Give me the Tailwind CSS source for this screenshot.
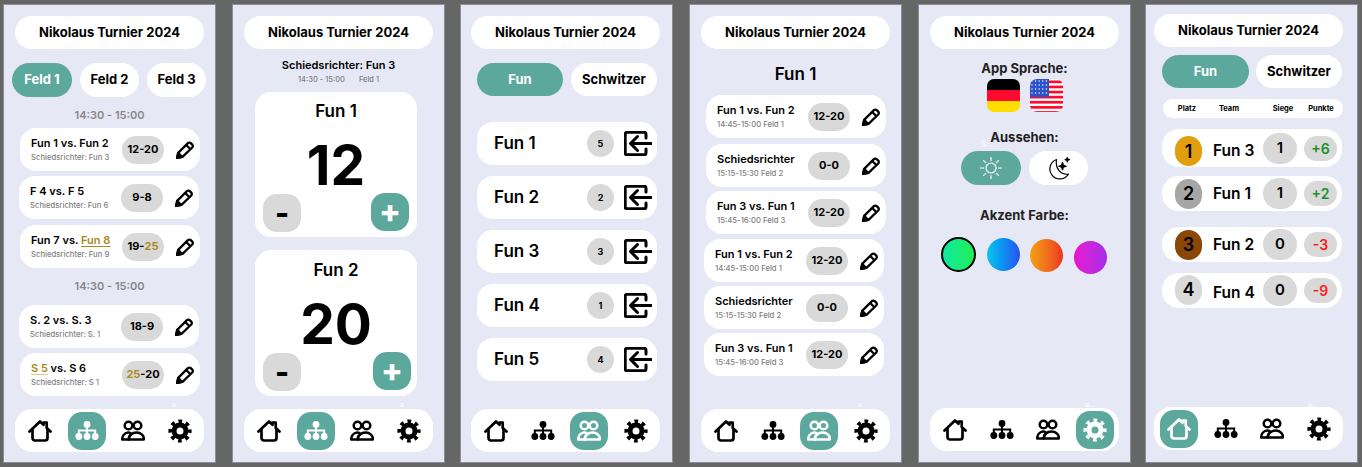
<!DOCTYPE html>
<html lang="de">

<head>
    <meta charset="UTF-8">
    <meta name="viewport" content="width=device-width, initial-scale=1.0">
    <title>Nikolaus Turnier 2024</title>
    <script src="https://cdn.jsdelivr.net/npm/@tailwindcss/browser@4"></script>
</head>

<body class="h-[467px] w-[1362px] overflow-hidden bg-[#666666] font-['Inter','Liberation_Sans',sans-serif] text-black">
    <div id="app" class="flex pt-[5px] pl-[4px]"></div>

    <script>
        const home = `<svg viewBox="0 0 24 24" class="w-[24px] h-[24px]" fill="none" stroke="currentColor" stroke-width="2.700" stroke-linecap="round" stroke-linejoin="round"><path d="M1.500 12.500 12 2.500l3.500 3.300V3.500h3.200v5.400l3.800 3.600"/><path d="M4.500 10.500V19a2.500 2.500 0 0 0 2.500 2.500h10a2.500 2.500 0 0 0 2.500-2.500v-8.500"/></svg>`;
        const tree = `<svg viewBox="0 0 24 24" class="w-[24px] h-[24px]" fill="currentColor"><circle cx="12" cy="5.500" r="3.400"/><circle cx="3.800" cy="17.500" r="3.400"/><circle cx="12" cy="17.500" r="3.400"/><circle cx="20.200" cy="17.500" r="3.400"/><path d="M11 7h2v3.500h8.200V15h-2v-2.500H13V15h-2v-2.500H4.800V15h-2v-4.500H11z"/></svg>`;
        const people = `<svg viewBox="0 0 24 24" class="w-[24px] h-[24px]" fill="none" stroke="currentColor" stroke-width="2.500" stroke-linejoin="round"><circle cx="7.500" cy="6.500" r="3.800"/><circle cx="16.500" cy="6.500" r="3.800"/><path d="M1.200 20.500c0-3.500 2.300-6.500 5.800-7 1.800-.2 2.700.5 3.500 1.500-1.800 1-2.800 3-2.800 5.500z"/><path d="M7.700 20.500c0-3.800 3.300-7 7.800-7s7.800 3.200 7.300 7z"/></svg>`;
        const gear = `<svg viewBox="0 0 24 24" class="w-[24px] h-[24px]" fill="none" stroke="currentColor"><circle cx="12" cy="12" r="6" stroke-width="5"/><circle cx="12" cy="12" r="9.800" stroke-width="3.600" stroke-dasharray="3.700 3.997" stroke-dashoffset="1.850"/></svg>`;
        const pencil = `<svg viewBox="0 0 24 24" class="w-[20px] h-[20px] shrink-0" fill="none" stroke="currentColor" stroke-width="2.700" stroke-linejoin="round"><path d="M2.500 21.500l1.300-6L15.500 3.800a2.400 2.400 0 0 1 3.400 0l1.800 1.800a2.400 2.400 0 0 1 0 3.400L9 20.200z"/><path d="M13.500 6l4.500 4.500"/><path d="M2.500 21.500l1.300-6 4.700 4.700z" fill="currentColor"/></svg>`;
        const enter = `<svg viewBox="0 0 28 25" class="w-[28px] h-[25px]" fill="none" stroke="currentColor" stroke-width="3" stroke-linecap="round" stroke-linejoin="round"><path d="M22 7V3.200a2 2 0 0 0-2-2H3.200a2 2 0 0 0-2 2v18.600a2 2 0 0 0 2 2H20a2 2 0 0 0 2-2V18"/><path d="M27 12.500H7M13.500 5.500l-7 7 7 7"/></svg>`;
        const sun = `<svg viewBox="0 0 24 24" class="w-[24px] h-[24px]" fill="none" stroke="white" stroke-width="1.200" stroke-linecap="round"><circle cx="12" cy="12" r="5"/><path d="M12 1.500v3M12 19.500v3M1.500 12h3M19.500 12h3M4.600 4.600l2.100 2.100M17.300 17.300l2.100 2.100M4.600 19.400l2.100-2.100M17.300 6.700l2.100-2.100"/></svg>`;
        const moon = `<svg viewBox="0 0 24 24" class="w-[24px] h-[24px]" fill="none" stroke="black" stroke-width="1.200" stroke-linejoin="round"><path d="M9.500 3.500a10 10 0 1 0 12 14.500c-7.500 1.500-13.500-5.500-12-14.500z"/><path d="M15.500 6.500l.9 2.800 2.800.9-2.800.9-.9 2.800-.9-2.800-2.800-.9 2.800-.9z" fill="black"/><path d="M20.300 1.500l.5 1.700 1.700.5-1.700.5-.5 1.700-.5-1.700-1.700-.5 1.700-.5z" fill="black"/></svg>`;

        const title = (cls) => `<div class="${cls} w-[189px] h-[33px] shrink-0 rounded-full bg-white flex items-center justify-center text-[13px] font-bold">Nikolaus Turnier 2024</div>`;

        const nav = (active, cls) => `
            <div class="${cls} mt-auto w-[189px] h-[43px] shrink-0 rounded-[17px] bg-white flex items-center gap-[8.500px] pl-[6px]">
                ${[home, tree, people, gear].map((icon, i) => i === active
                    ? `<div class="w-[38px] h-[38px] rounded-[14px] bg-[#5DA89C] text-white flex items-center justify-center">${icon}</div>`
                    : `<div class="w-[38px] h-[38px] flex items-center justify-center">${icon}</div>`).join('')}
            </div>`;

        const tab = (text, on, cls) => `<div class="${cls} rounded-[17px] flex items-center justify-center font-bold ${on ? 'bg-[#5DA89C] text-white' : 'bg-white'}">${text}</div>`;

        const match = (name, sub, score, cls) => `
            <div class="${cls} w-[180px] h-[43px] shrink-0 rounded-[16px] bg-white flex items-center pl-[11px]">
                <div class="w-[91px] shrink-0">
                    <div class="text-[11px] leading-[13px] font-semibold whitespace-nowrap">${name}</div>
                    <div class="mt-[3px] text-[7.700px] leading-[10px] font-medium text-[#808080] whitespace-nowrap">${sub}</div>
                </div>
                <div class="w-[42px] h-[28px] shrink-0 rounded-full bg-[#D9D9D9] flex items-center justify-center text-[11px] font-bold">${score}</div>
                <div class="ml-[11px]">${pencil}</div>
            </div>`;

        const slot = (text, cls) => `<div class="${cls} h-[16px] text-center text-[11px] leading-[16px] font-semibold text-[#888888]">${text}</div>`;

        const counter = (name, value, cardCls, nameCls, rowCls, plusCls) => `
            <div class="${cardCls} ml-[22px] w-[162px] rounded-[16px] bg-white flex flex-col">
                <div class="${nameCls} h-[20px] text-center text-[17px] leading-[20px] font-semibold">${name}</div>
                <div class="mt-[15px] h-[58px] text-center text-[55px] leading-[58px] font-bold">${value}</div>
                <div class="${rowCls} flex justify-between">
                    <div class="w-[38px] h-[38px] rounded-[14px] bg-[#D9D9D9] flex items-center justify-center text-[30px] font-extrabold">-</div>
                    <div class="${plusCls} w-[38px] h-[38px] rounded-[14px] bg-[#5DA89C] text-white flex items-center justify-center text-[32px] font-extrabold">+</div>
                </div>
            </div>`;

        const team = (name, count, cls) => `
            <div class="${cls} ml-[16px] w-[180px] h-[43px] shrink-0 rounded-[16px] bg-white flex items-center pl-[17px]">
                <div class="pt-[1px] text-[17px] font-semibold w-[93px]">${name}</div>
                <div class="w-[27px] h-[27px] rounded-full bg-[#D9D9D9] flex items-center justify-center text-[9px] font-bold">${count}</div>
                <div class="ml-[10px] text-black">${enter}</div>
            </div>`;

        const rank = (place, color, name, wins, points, pointColor, cls, rowH, circleCls, nameCls) => `
            <div class="${cls} ${rowH} ml-[16px] w-[180px] shrink-0 rounded-[17px] bg-white flex items-center">
                <div class="${color} ${circleCls} ml-[13px] w-[27px] h-[30px] rounded-full flex items-center justify-center text-[18px] font-semibold">${place}</div>
                <div class="${nameCls} ml-[11px] w-[50px] text-[15.500px] font-semibold">${name}</div>
                <div class="w-[34px] h-[31px] rounded-full bg-[#D9D9D9] flex items-center justify-center text-[15px] font-semibold">${wins}</div>
                <div class="${pointColor} ml-[7px] w-[33px] h-[25px] rounded-full bg-[#D9D9D9] flex items-center justify-center text-[14px] font-semibold">${points}</div>
            </div>`;

        const gold = 'text-[#A88A1E]';
        const panel = 'relative w-[211px] h-[457px] shrink-0 bg-[#E6E8F5] shadow-[0_0_0_1px_#8c8d96] flex flex-col';

        const fieldPage = `
            <div class="${panel}">
                ${title('mt-[11px] ml-[11px]')}
                <div class="mt-[14px] ml-[8px] flex gap-[8px] text-[13px]">
                    ${tab('Feld 1', true, 'w-[60px] h-[34px]')}
                    ${tab('Feld 2', false, 'w-[59px] h-[34px]')}
                    ${tab('Feld 3', false, 'w-[59px] h-[34px]')}
                </div>
                ${slot('14:30 - 15:00', 'mt-[10px]')}
                ${match('Fun 1 vs. Fun 2', 'Schiedsrichter: Fun 3', '12-20', 'mt-[5px] ml-[16px]')}
                ${match('F 4 vs. F 5', 'Schiedsrichter: Fun 6', '9-8', 'mt-[5px] ml-[15px]')}
                ${match(`Fun 7 vs. <span class="${gold} underline underline-offset-2">Fun 8</span>`, 'Schiedsrichter: Fun 9', `19-<span class="${gold}">25</span>`, 'mt-[6px] ml-[16px]')}
                ${slot('14:30 - 15:00', 'mt-[10px]')}
                ${match('S. 2 vs. S. 3', 'Schiedsrichter: S. 1', '18-9', 'mt-[11px] ml-[15px]')}
                ${match(`<span class="${gold} underline decoration-[#d8c98f] underline-offset-2">S 5</span> vs. S 6`, 'Schiedsrichter: S 1', `<span class="${gold}">25</span>-20`, 'mt-[5px] ml-[16px]')}
                ${nav(1, 'mb-[10px] ml-[11px]')}
                <span class="absolute left-[168px] top-[395px] text-[7px] text-white">a</span>
            </div>`;

        const scorePage = `
            <div class="${panel} ml-[18px]">
                ${title('mt-[11px] ml-[11px]')}
                <div class="mt-[9px] h-[15px] text-center text-[11px] leading-[15px] font-semibold">Schiedsrichter: Fun 3</div>
                <div class="mt-[2px] h-[10px] flex justify-center gap-[14px] text-[7.500px] leading-[10px] font-medium text-[#808080]"><span>14:30 - 15:00</span><span>Feld 1</span></div>
                ${counter('Fun 1', 12, 'mt-[7px] h-[145px]', 'mt-[9px]', 'pl-[8px] pr-[8px]', 'mt-[-1px]')}
                ${counter('Fun 2', 20, 'mt-[13px] h-[146px]', 'mt-[10px]', 'pl-[8px] pr-[6px]', 'mt-[-1px]')}
                ${nav(1, 'mb-[10px] ml-[11px]')}
                <span class="absolute left-[167px] top-[395px] text-[7px] text-white">a</span>
            </div>`;

        const teamsPage = `
            <div class="${panel} ml-[17px]">
                ${title('mt-[11px] ml-[10px]')}
                <div class="mt-[14px] ml-[16px] flex gap-[8px] text-[13px]">
                    ${tab('Fun', true, 'w-[86px] h-[33px]')}
                    ${tab('Schwitzer', false, 'w-[86px] h-[33px]')}
                </div>
                ${team('Fun 1', 5, 'mt-[26px]')}
                ${team('Fun 2', 2, 'mt-[11px]')}
                ${team('Fun 3', 3, 'mt-[11px]')}
                ${team('Fun 4', 1, 'mt-[11px]')}
                ${team('Fun 5', 4, 'mt-[11px]')}
                ${nav(2, 'mb-[10px] ml-[10px]')}
            </div>`;

        const teamPage = `
            <div class="${panel} ml-[18px]">
                ${title('mt-[11px] ml-[11px]')}
                <div class="mt-[15px] h-[20px] text-center text-[17px] leading-[20px] font-semibold">Fun 1</div>
                ${match('Fun 1 vs. Fun 2', '14:45-15:00 Feld 1', '12-20', 'mt-[11px] ml-[16px]')}
                ${match('Schiedsrichter', '15:15-15:30 Feld 2', '0-0', 'mt-[6px] ml-[16px]')}
                ${match('Fun 3 vs. Fun 1', '15:45-16:00 Feld 3', '12-20', 'mt-[4px] ml-[16px]')}
                ${match('Fun 1 vs. Fun 2', '14:45-15:00 Feld 1', '12-20', 'mt-[5px] ml-[14px]')}
                ${match('Schiedsrichter', '15:15-15:30 Feld 2', '0-0', 'mt-[4px] ml-[14px]')}
                ${match('Fun 3 vs. Fun 1', '15:45-16:00 Feld 3', '12-20', 'mt-[4px] ml-[14px]')}
                ${nav(2, 'mb-[10px] ml-[11px]')}
                <span class="absolute left-[168px] top-[395px] text-[7px] text-white">a</span>
            </div>`;

        const stripes = Array.from({ length: 7 }, (_, i) => `<rect y="${i * 5.1 + 1.500}" width="33" height="2.700" fill="#FF0A2F"/>`).join('');
        const stars = Array.from({ length: 20 }, (_, i) => `<circle cx="${2 + (i % 5) * 3.600}" cy="${2 + Math.floor(i / 5) * 4}" r="0.700" fill="white"/>`).join('');

        const settingsPage = `
            <div class="${panel} ml-[18px]">
                ${title('mt-[11px] ml-[11px]')}
                <div class="mt-[11px] h-[16px] text-center text-[13px] leading-[16px] font-bold text-[#222222]">App Sprache:</div>
                <div class="mt-[3px] flex justify-center gap-[10px]">
                    <div class="w-[33px] h-[33px] rounded-[7px] overflow-hidden flex flex-col">
                        <div class="h-[11px] bg-black"></div>
                        <div class="h-[11px] bg-[#FF0A2F]"></div>
                        <div class="h-[11px] bg-[#FFDD00]"></div>
                    </div>
                    <svg viewBox="0 0 33 33" class="w-[33px] h-[33px] rounded-[7px] bg-white">${stripes}<rect width="19" height="18" fill="#2B52C9"/>${stars}</svg>
                </div>
                <div class="mt-[17px] h-[16px] text-center text-[13px] leading-[16px] font-bold text-[#222222]">Aussehen:</div>
                <div class="mt-[6px] flex justify-center gap-[8px]">
                    <div class="w-[60px] h-[34px] rounded-full bg-[#5DA89C] flex items-center justify-center">${sun}</div>
                    <div class="w-[59px] h-[34px] rounded-full bg-white flex items-center justify-center">${moon}</div>
                </div>
                <div class="mt-[22px] h-[16px] text-center text-[13px] leading-[16px] font-bold text-[#222222]">Akzent Farbe:</div>
                <div class="mt-[14px] ml-[22px] flex items-start gap-[10.500px]">
                    <div class="w-[35px] h-[35px] rounded-full border-[2px] border-black bg-linear-to-r from-[#10E8A0] to-[#22EE4A]"></div>
                    <div class="mt-[1px] w-[33px] h-[33px] rounded-full bg-linear-to-r from-[#12C4EE] to-[#2650F0]"></div>
                    <div class="mt-[2px] w-[33px] h-[33px] rounded-full bg-linear-to-r from-[#F0A010] to-[#EE3020]"></div>
                    <div class="mt-[4px] w-[33px] h-[33px] rounded-full bg-linear-to-r from-[#E810D0] to-[#A82AE8]"></div>
                </div>
                ${nav(3, 'mb-[11px] ml-[11px]')}
                <span class="absolute left-[62px] top-[134px] text-[7px] text-white">S...</span>
                <span class="absolute left-[166px] top-[395px] text-[7px] text-white">a...</span>
            </div>`;

        const tablePage = `
            <div class="${panel} ml-[16px]">
                ${title('mt-[9px] ml-[8px]')}
                <div class="mt-[8px] ml-[16px] flex gap-[7px] text-[13px]">
                    ${tab('Fun', true, 'w-[87px] h-[33px]')}
                    ${tab('Schwitzer', false, 'w-[86px] h-[33px]')}
                </div>
                <div class="mt-[11px] ml-[17px] w-[180px] h-[19px] rounded-full bg-white flex items-center text-[7.500px] font-bold text-center">
                    <div class="w-[48px]">Platz</div>
                    <div class="w-[36px]">Team</div>
                    <div class="ml-[20px] w-[32px]">Siege</div>
                    <div class="ml-[6px] w-[32px]">Punkte</div>
                </div>
                ${rank(1, 'bg-[#E19F0F]', 'Fun 3', 1, '+6', 'text-[#14912A]', 'mt-[11px]', 'h-[38px]', 'mt-[6px]', 'mt-[6px]')}
                ${rank(2, 'bg-[#A6A6A6]', 'Fun 1', 1, '+2', 'text-[#14912A]', 'mt-[9px]', 'h-[35px]', '', '')}
                ${rank(3, 'bg-[#8B4708]', 'Fun 2', 0, '-3', 'text-[#FF1A1A]', 'mt-[16px]', 'h-[35px]', '', '')}
                ${rank(4, 'bg-[#D9D9D9]', 'Fun 4', 0, '-9', 'text-[#FF1A1A]', 'mt-[11px]', 'h-[35px]', 'mt-[-2px]', 'mt-[5px]')}
                ${nav(0, 'mb-[12px] ml-[8px]')}
                <span class="absolute left-[162px] top-[395px] text-[7px] text-white">a...</span>
            </div>`;

        document.getElementById('app').innerHTML = fieldPage + scorePage + teamsPage + teamPage + settingsPage + tablePage;
    </script>
</body>

</html>
